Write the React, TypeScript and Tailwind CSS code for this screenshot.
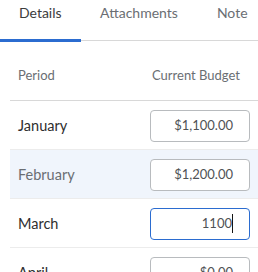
import React, { useState } from 'react';

type Row = { period: string; value: string; focused?: boolean; shaded?: boolean };

const rows: Row[] = [
  { period: 'January', value: '$1,100.00' },
  { period: 'February', value: '$1,200.00', shaded: true },
  { period: 'March', value: '1100', focused: true },
  { period: 'April', value: '$0.00' },
];

const tabs = ['Details', 'Attachments', 'Note'];

export default function App() {
  const [active, setActive] = useState(0);

  return (
    <div className="w-[258px] h-[272px] overflow-hidden bg-white font-['Lato',sans-serif]">
      <div className="flex border-b border-[#d8d8d8] h-[41px]">
        {tabs.map((t, i) => (
          <button
            key={t}
            onClick={() => setActive(i)}
            className={
              i === active
                ? 'h-[42px] -mb-[2px] px-[19px] pt-[3px] flex items-start whitespace-nowrap text-[14px] leading-[20px] text-[#3c3c3c] border-b-[3px] border-[#2b6cd0]'
                : 'h-[40px] px-[19.5px] pt-[3px] flex items-start whitespace-nowrap text-[14px] leading-[20px] text-[#6a6e73]'
            }
          >
            {t}
          </button>
        ))}
      </div>

      <div className="ml-[10px]">
        <div className="flex items-end h-[60px] pb-[15px] border-b border-[#d8d8d8] text-[13px] leading-[20px] text-[#6a6e73]">
          <div className="w-[140px] pl-[8px]">Period</div>
          <div className="pl-[2px]">Current Budget</div>
        </div>

        {rows.map((r) => (
          <div
            key={r.period}
            className={
              'flex items-center h-[49px] pt-px border-b border-[#ececec] ' +
              (r.shaded ? 'bg-[#f0f5fc]' : 'bg-white')
            }
          >
            <div
              className={
                'w-[140px] pl-[8px] text-[14.5px] ' +
                (r.shaded ? 'text-[#6a6e73]' : 'text-[#2e2e2e]')
              }
            >
              {r.period}
            </div>
            <div
              className={
                'w-[100px] h-[32px] rounded-[4px] flex items-center justify-end pr-[16px] text-[13px] text-[#4f5255] bg-white ' +
                (r.focused ? 'border border-[#2b6cd0]' : 'border border-[#b8bbbe]')
              }
            >
              {r.value}
              {r.focused && <span className="w-px h-[19px] bg-[#151515]" />}
            </div>
          </div>
        ))}
      </div>
    </div>
  );
}
